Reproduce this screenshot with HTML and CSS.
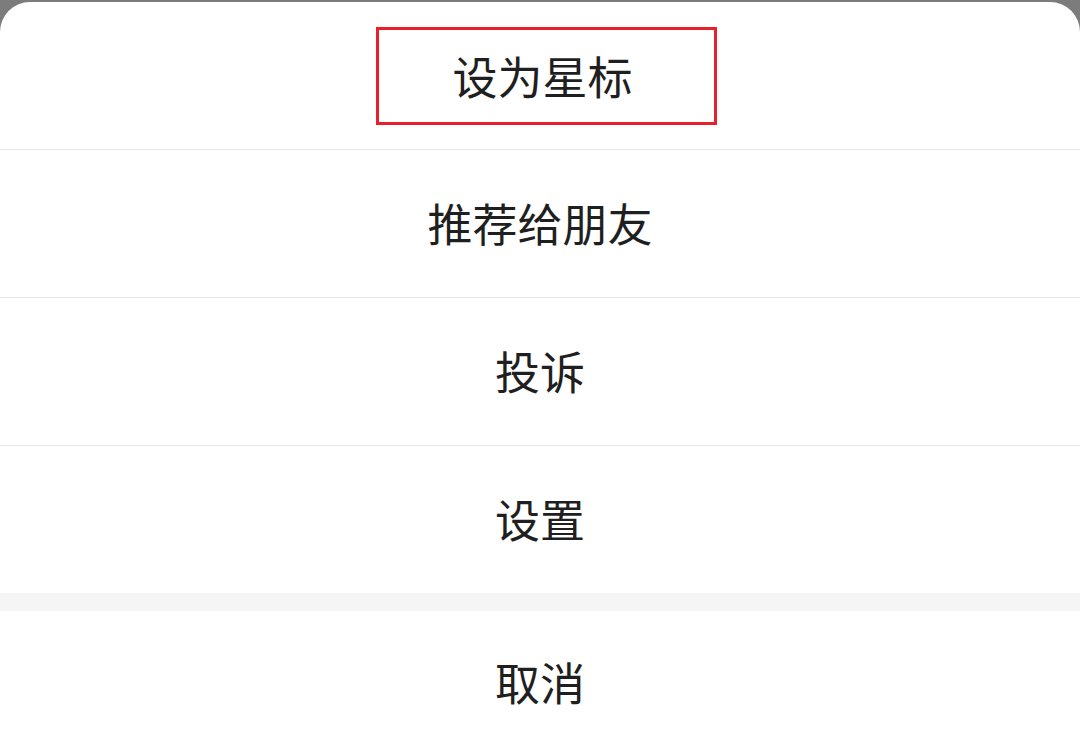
FILE: index.html
```html
<!DOCTYPE html>
<html lang="zh-CN">
<head>
    <meta charset="UTF-8">
    <meta name="viewport" content="width=device-width, initial-scale=1.0">
    <title>操作菜单</title>
    <link rel="stylesheet" href="styles.css">
</head>
<body>
<div class="backdrop"></div>
<div class="sheet">
    <div class="action-item">
        <span class="highlight">设为星标</span>
    </div>
    <div class="action-item">推荐给朋友</div>
    <div class="action-item">投诉</div>
    <div class="action-item last">设置</div>
    <div class="gap"></div>
    <div class="action-item cancel">取消</div>
</div>
</body>
</html>
```

FILE: styles.css
```css
body {
    margin: 0;
    height: 755px;
    overflow: hidden;
    background: #7c7c7c;
    font-family: "Noto Sans CJK SC", "Noto Sans", sans-serif;
    color: #1f1f1f;
}

.backdrop {
    height: 2px;
}

.sheet {
    background: #fff;
    border-radius: 30px 30px 0 0;
    height: 753px;
}

.action-item {
    height: 144px;
    padding-bottom: 3px;
    border-bottom: 1px solid #e6e6e6;
    display: flex;
    justify-content: center;
    align-items: center;
    font-size: 45px;
    line-height: 1;
}

.action-item.last {
    border-bottom: none;
}

.highlight {
    display: flex;
    justify-content: center;
    align-items: center;
    width: 327px;
    height: 92px;
    border: 3px solid #e8202c;
    margin-left: 13px;
    margin-top: 3px;
    padding-right: 8px;
    box-sizing: content-box;
}

.gap {
    height: 18px;
    background: #f5f5f5;
}

.cancel {
    height: 141px;
    border-bottom: none;
}
```
